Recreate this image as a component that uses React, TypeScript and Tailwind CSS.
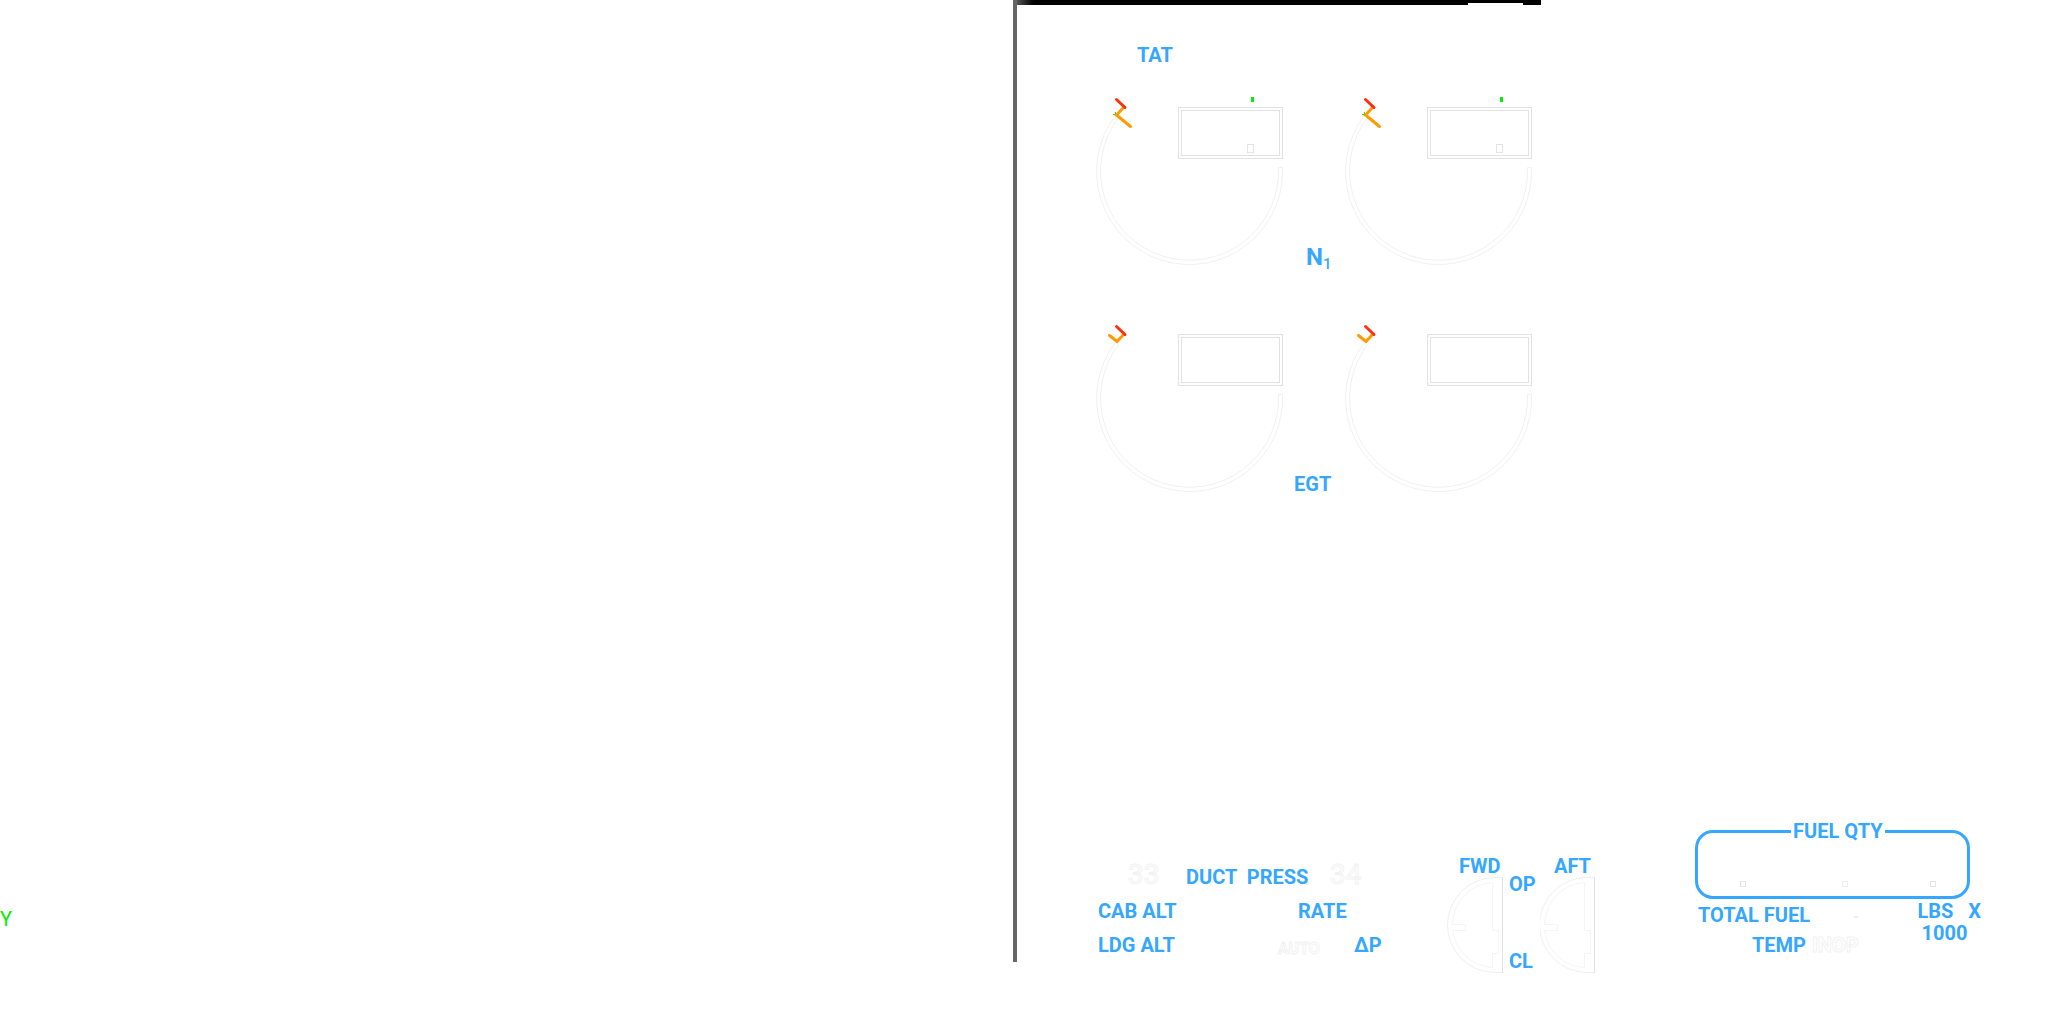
import React from "react";

function Gauge({ label, kind }: { label: string; kind: "n1" | "egt" }) {
  return (
    <svg className="h-[179px] w-48 shrink-0" viewBox="0 0 192 179" fill="none" role="img" aria-label={label}>
      <path d="M21 26 A93 93 0 1 0 188.5 77.5 H184.5 A89 89 0 1 1 25 27" stroke="#f1f1f1" />
      <rect x="84.5" y="17.5" width="104" height="51" stroke="#e2e2e2" />
      <rect x="87.5" y="20.5" width="98" height="45" stroke="#e2e2e2" />
      {kind === "n1" ? (
        <>
          <rect x="153.5" y="54.5" width="6" height="8" stroke="#e4e4e4" />
          <rect x="157" y="7" width="3" height="5" fill="#0bea0b" />
          <path d="M19 24.5 H23 M21.5 22 V25" stroke="#2ee61a" />
          <path d="M30 17 L22.5 25 L36.5 36.5" stroke="#ff9a00" strokeWidth="3" strokeLinecap="round" />
        </>
      ) : (
        <path d="M15.5 18.5 L23 24.5 L30 17" stroke="#ff9a00" strokeWidth="3" strokeLinecap="round" />
      )}
      <path d="M22.5 9.5 L31 17.5" stroke="#ff2d12" strokeWidth="3" strokeLinecap="round" />
    </svg>
  );
}

function ValveDial({ clipped = false }: { clipped?: boolean }) {
  return (
    <svg className="h-24 w-14" viewBox={clipped ? "1 0 56 96" : "0 0 56 96"} fill="none" aria-hidden="true">
      <path d="M56 .5 H48 A47.5 47.5 0 0 0 48 95.5 H56" stroke="#efefef" />
      <path d="M55.5 0 V96" stroke="#e2e2e2" />
      <path
        d="M45.5 5.5 A42.5 42.5 0 0 0 5.5 47.5 H18.5 V53.5 H5.5 A42.5 42.5 0 0 0 45.5 90.5 V76.5 H51.5 V53.5 H45.5 Z"
        stroke="#f5f5f5"
      />
    </svg>
  );
}

const ghost = "text-white [-webkit-text-stroke:1px_#f2f2f2]";

export default function App() {
  return (
    <div className="flex min-h-screen overflow-hidden bg-white font-['Roboto',sans-serif] text-[20px] leading-6 font-bold whitespace-nowrap text-[#35a7ff]">
      <aside className="flex flex-[1013] flex-col justify-end pb-[93px] font-normal text-[#00f000]">
        <span>Y</span>
      </aside>

      <main className="flex flex-[1035]">
        <div className="h-[962px] w-1 shrink-0 bg-[#666666]" />
        <div className="flex flex-1 flex-col">
          <div className="flex h-[5px] w-[524px] items-end justify-end bg-linear-to-r from-[#555555] to-black to-4% pr-[18px]">
            <div className="h-0.5 w-[55px] bg-white" />
          </div>

          <h2 className="mt-[38px] ml-[120px]">TAT</h2>

          <section className="mt-[23px] ml-[77px] flex items-end">
            <Gauge label="Engine 1 N1" kind="n1" />
            <h2 className="w-[57px] pl-5 text-[24px]">
              N<sub className="text-[15px] font-medium">1</sub>
            </h2>
            <Gauge label="Engine 2 N1" kind="n1" />
          </section>

          <section className="mt-12 ml-[77px] flex items-end">
            <Gauge label="Engine 1 EGT" kind="egt" />
            <h2 className="w-[57px] pl-2">EGT</h2>
            <Gauge label="Engine 2 EGT" kind="egt" />
          </section>

          <footer className="mt-auto flex items-end pb-[51px] pl-[81px]">
            <section className="flex w-[349px] flex-col gap-[10px] pb-3">
              <div className="flex items-center">
                <span className={`w-[88px] pl-[30px] text-[28px] font-normal ${ghost}`}>33</span>
                <span className="w-36 pt-1 whitespace-pre">DUCT  PRESS</span>
                <span className={`text-[28px] font-normal ${ghost}`}>34</span>
              </div>
              <div className="flex">
                <span className="w-[200px]">CAB ALT</span>
                <span>RATE</span>
              </div>
              <div className="flex">
                <span className="w-[180px]">LDG ALT</span>
                <span className={`w-[76px] pt-1 text-[16px] ${ghost}`}>AUTO</span>
                <span>ΔP</span>
              </div>
            </section>

            <section className="flex w-[248px] items-end">
              <div className="w-[62px] leading-[22px]">
                <div className="pl-3">FWD</div>
                <ValveDial />
              </div>
              <div className="flex h-[101px] w-[31px] flex-col justify-between">
                <span>OP</span>
                <span>CL</span>
              </div>
              <div className="leading-[22px]">
                <div className="pl-3.5">AFT</div>
                <ValveDial clipped />
              </div>
            </section>

            <section className="w-[286px] pb-4">
              <fieldset className="h-20 w-[275px] rounded-[18px] border-3 border-[#35a7ff]">
                <legend className="ml-[93px] px-0.5">FUEL QTY</legend>
                <div className="flex pt-[38px] pl-[42px]">
                  <i className="mr-24 size-1.5 border border-[#e5e5e5]" />
                  <i className="mr-[82px] size-1.5 border border-[#efefef]" />
                  <i className="size-1.5 border border-[#e5e5e5]" />
                </div>
              </fieldset>
              <div className="flex items-start">
                <div className="w-[227px] pt-1 pl-[3px]">
                  <div className="flex items-center">
                    <span className="w-[156px]">TOTAL FUEL</span>
                    <i className="mt-1 h-0.5 w-1 bg-[#eeeeee]" />
                  </div>
                  <div className="mt-1.5 flex">
                    <span className="w-[108px] text-right">TEMP</span>
                    <span className={`pl-1.5 ${ghost}`}>INOP</span>
                  </div>
                </div>
                <div className="pt-px leading-[22px]">
                  <div className="whitespace-pre">LBS   X</div>
                  <div className="pl-1">1000</div>
                </div>
              </div>
            </section>
          </footer>
        </div>
      </main>
    </div>
  );
}
